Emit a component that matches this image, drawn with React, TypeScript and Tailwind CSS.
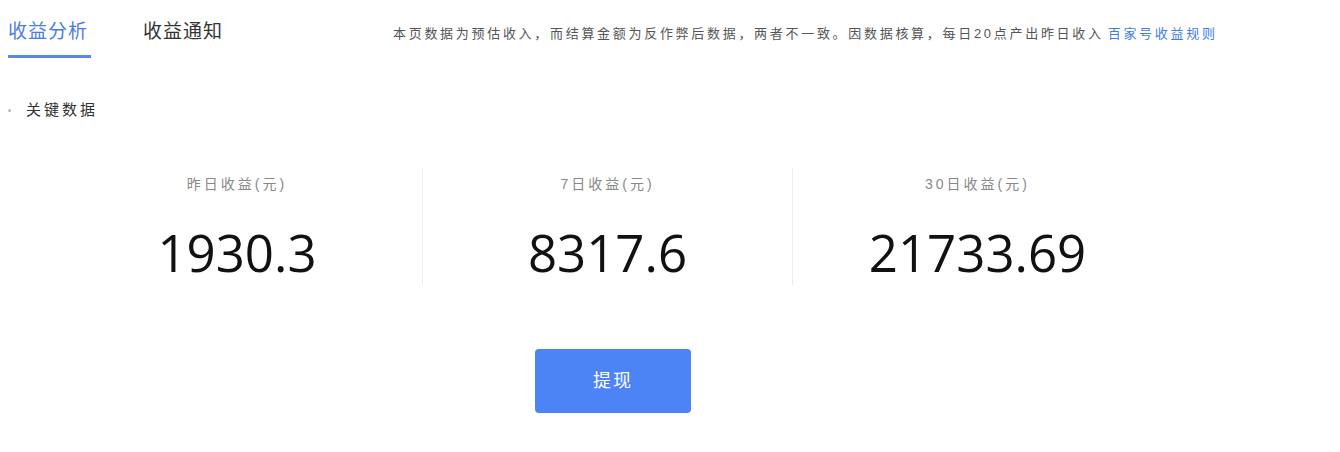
const cjk = "font-['Liberation_Sans','Noto_Sans_CJK_SC',sans-serif]";

const stats = [
  { label: "昨日收益(元)", value: "1930.3" },
  { label: "7日收益(元)", value: "8317.6" },
  { label: "30日收益(元)", value: "21733.69" },
];

export default function App() {
  return (
    <div className={`w-[1340px] h-[452px] bg-white overflow-hidden ${cjk}`}>
      {/* tabs + notice */}
      <div className="flex items-start h-[58px]">
        <div className="ml-[8px] pt-[20px] h-[58px] border-b-[3px] border-[#5a88e4] w-[83px]">
          <span className="text-[19px] leading-6 tracking-[1px] text-[#4a7ce2]">收益分析</span>
        </div>
        <div className="ml-[52px] pt-[20px]">
          <span className="text-[19px] leading-6 tracking-[1px] text-[#333]">收益通知</span>
        </div>
        <p className="ml-[170px] pt-[26px] text-[13px] leading-4 tracking-[2.7px] text-[#555] whitespace-nowrap">
          本页数据为预估收入，而结算金额为反作弊后数据，两者不一致。因数据核算，每日20点产出昨日收入
          <a className="ml-1 text-[#3f7ee6]">百家号收益规则</a>
        </p>
      </div>

      {/* section title */}
      <div className="flex items-center mt-[42px] h-5">
        <span className="ml-[8px] w-[3px] h-[3px] rounded-full bg-[#bbb]" />
        <span className="ml-[15px] text-[15px] tracking-[3px] text-[#333]">关键数据</span>
      </div>

      {/* stats */}
      <div className="flex ml-[52px] mt-[48px] h-[117px]">
        {stats.map((s, i) => (
          <div
            key={i}
            className={`w-[370px] flex flex-col items-center pt-[6px] ${i > 0 ? "border-l border-[#ececec]" : ""}`}
          >
            <span className="text-[14px] leading-5 tracking-[3px] text-[#888]">{s.label}</span>
            <span className="mt-[28px] text-[51px] leading-[60px] text-[#111] font-['Open_Sans',sans-serif]">
              {s.value}
            </span>
          </div>
        ))}
      </div>

      {/* button */}
      <button className="ml-[535px] mt-[64px] w-[156px] h-[64px] rounded bg-[#4d84f5] text-white text-[18px] tracking-[2px]">
        提现
      </button>
    </div>
  );
}
